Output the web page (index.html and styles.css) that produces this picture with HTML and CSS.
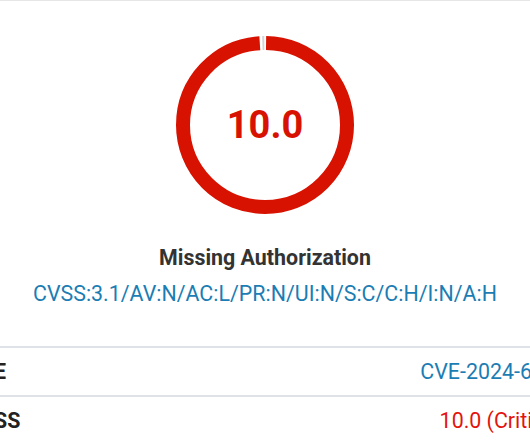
FILE: index.html
```html
<!DOCTYPE html>
<html lang="en">
<head>
  <meta charset="UTF-8" />
  <meta name="viewport" content="width=device-width, initial-scale=1.0"/>
  <title>CVE-2024-6</title>
  <link rel="stylesheet" href="styles.css">
</head>
<body>

  <div class="panel">

    <!-- score ring -->
    <div class="score">
      <svg class="ring" width="180" height="180" viewBox="0 0 180 180">
        <circle class="ring-value" cx="90" cy="90" r="82" />
        <circle class="ring-mark" cx="90" cy="90" r="82" />
      </svg>
      <span class="score-num">10.0</span>
    </div>

    <h3 class="vuln-title">Missing Authorization</h3>
    <a class="vector" href="#">CVSS:3.1/AV:N/AC:L/PR:N/UI:N/S:C/C:H/I:N/A:H</a>

    <!-- details -->
    <table class="details">
      <tr>
        <th>CVE</th>
        <td><a href="#">CVE-2024-6297</a></td>
      </tr>
      <tr>
        <th>CVSS</th>
        <td class="critical">10.0 (Critical)</td>
      </tr>
    </table>

  </div>

</body>
</html>
```

FILE: styles.css
```css
body {
  margin: 0;
  font-family: Roboto, "Liberation Sans", sans-serif;
  background-color: #fff;
  color: #333;
  overflow: hidden;
}

.panel {
  border-top: 1px solid #e6e6e6;
  display: flex;
  flex-direction: column;
  align-items: center;
  padding-top: 34px;
}

/* 分数圆环 */
.score {
  position: relative;
  width: 180px;
  height: 180px;
  display: flex;
  justify-content: center;
  align-items: center;
}
.ring {
  position: absolute;
  top: 0;
  left: 0;
  transform: rotate(-90deg);
}
.ring circle {
  fill: none;
  stroke-width: 14;
}
.ring-value {
  stroke: #d81200;
  /* 2*pi*82 = 515.2, 顶部留一条缝 */
  stroke-dasharray: 508 7.2;
  stroke-dashoffset: -1.1;
}
.ring-mark {
  stroke: #d4d4d4;
  stroke-dasharray: 2 513.2;
  stroke-dashoffset: 3.5;
}
.score-num {
  position: relative;
  font-size: 38px;
  font-weight: 700;
  color: #d81200;
}

.vuln-title {
  margin: 31px 0 0;
  font-size: 21.4px;
  line-height: 24px;
  font-weight: 700;
  color: #333;
}

.vector {
  margin-top: 12px;
  font-size: 21.4px;
  line-height: 24px;
  color: #1b7db3;
  text-decoration: none;
}

/* 表格 */
.details {
  align-self: flex-start;
  margin: 40px 0 0 -34px;
  width: 602px;
  border-collapse: collapse;
  font-size: 21.4px;
}
.details tr {
  border-top: 2px solid #dfe3e8;
}
.details th,
.details td {
  padding: 12px 0 11px;
  line-height: 24px;
}
.details th {
  text-align: left;
  font-weight: 700;
  color: #222;
}
.details td {
  text-align: right;
}
.details a {
  color: #1b7db3;
  text-decoration: none;
}
.details .critical {
  color: #e3140c;
}
```
